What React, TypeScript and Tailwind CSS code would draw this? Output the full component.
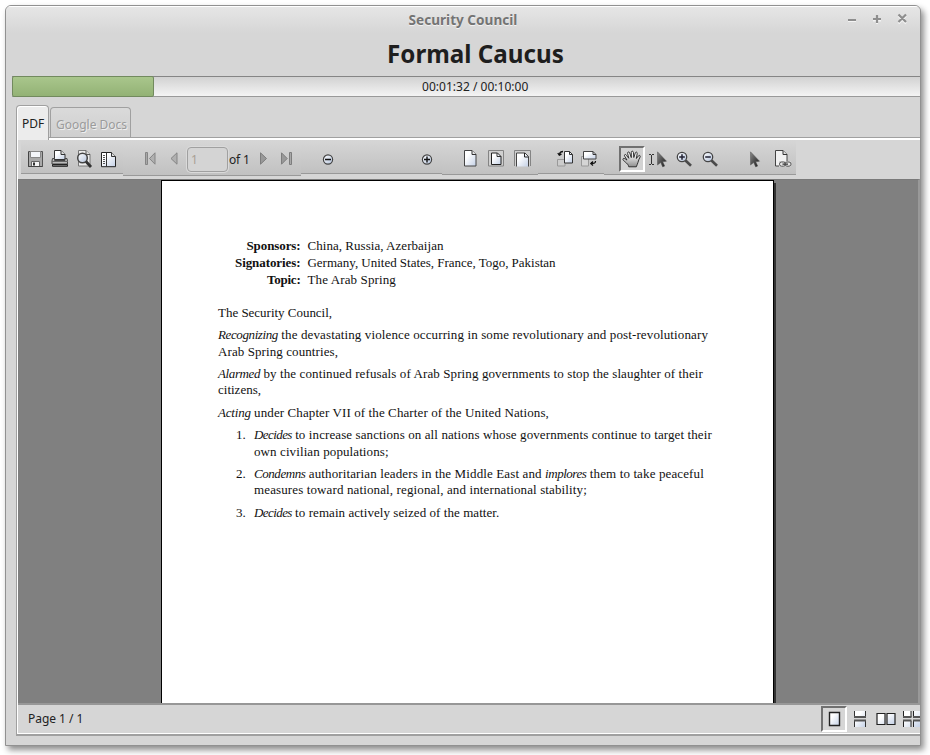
import React from 'react';

type Kids = { children?: React.ReactNode };

function Icon({ children, size = 20, className = '' }: Kids & { size?: number; className?: string }) {
  return (
    <svg width={size} height={size} viewBox={`0 0 ${size} ${size}`} fill="none" className={`block shrink-0 ${className}`}>
      {children}
    </svg>
  );
}

function Slot({ children, className = 'w-6' }: Kids & { className?: string }) {
  return <div className={`flex h-6 shrink-0 items-center justify-center ${className}`}>{children}</div>;
}

function Segment({ children, className }: Kids & { className: string }) {
  return (
    <div className={`flex shrink-0 items-start border-b border-[#999] bg-linear-to-b from-[#d6d6d6] to-[#c1c1c1] pt-[7px] ${className}`}>
      {children}
    </div>
  );
}

function Defs() {
  return (
    <svg width="0" height="0" className="absolute">
      <defs>
        <linearGradient id="paper" x1="0" y1="0" x2="1" y2="1">
          <stop offset="0.3" stopColor="#fff" />
          <stop offset="1" stopColor="#c3d0e6" />
        </linearGradient>
        <linearGradient id="lens" x1="0" y1="0" x2="1" y2="1">
          <stop offset="0" stopColor="#fff" />
          <stop offset="1" stopColor="#b4c3dc" />
        </linearGradient>
        <linearGradient id="dark" x1="0" y1="0" x2="1" y2="1">
          <stop offset="0" stopColor="#8a8a8a" />
          <stop offset="0.8" stopColor="#2c2c2c" />
        </linearGradient>
        <linearGradient id="palm" x1="0" y1="0" x2="0" y2="1">
          <stop offset="0.2" stopColor="#f6f6f6" />
          <stop offset="1" stopColor="#8d8d8d" />
        </linearGradient>
      </defs>
    </svg>
  );
}

const SaveIcon = () => (
  <Icon>
    <path d="M2.500 2.500h14v15h-14z" fill="#a9a9a9" stroke="#555" />
    <path d="M4.500 2.500h10v6h-10z" fill="#f4f6fa" stroke="#888" />
    <path d="M5.500 12.500h8v5h-8z" fill="#f4f4f4" stroke="#666" />
    <path d="M7 13.500h2v3H7z" fill="#333" />
    <path d="M2.500 3v14.500h14" stroke="#444" />
  </Icon>
);

const PrintIcon = () => (
  <Icon>
    <path d="M4.500 10.500v-9h6.500l4 4v5z" fill="url(#paper)" stroke="#333" />
    <path d="M11 1.500v4h4" fill="#ddd" stroke="#333" />
    <path d="M2.500 9.500h2v2h10.500v-2h2l.5 2.500v3h-15.500v-3z" fill="#bbb" stroke="#444" />
    <path d="M2 12.500h16" stroke="#666" />
    <path d="M2.500 15.500h15v1.800h-15z" fill="#777" stroke="#222" />
  </Icon>
);

const FindIcon = () => (
  <Icon>
    <path d="M4.500 1.500h7.500l4 4v11.500h-11.500z" fill="#ededed" stroke="#777" />
    <path d="M12 1.500v4h4" fill="#ddd" stroke="#555" />
    <circle cx="8.500" cy="9" r="4.800" fill="url(#lens)" stroke="#444" strokeWidth="1.500" />
    <path d="M12 12.500l5 5.500" stroke="#333" strokeWidth="2.800" />
  </Icon>
);

const SidebarIcon = () => (
  <Icon>
    <path d="M3.500 3.500h10l4 4v10.200h-14z" fill="url(#paper)" stroke="#222" />
    <path d="M13.500 3.500v4h4" fill="#ddd" stroke="#333" />
    <path d="M8.500 3.500v14" stroke="#333" />
    <path d="M5 6.500h2M5 8.500h2M5 10.500h2M5 12.500h2M5 14.500h2" stroke="#555" />
  </Icon>
);

const FirstIcon = () => (
  <Icon>
    <path d="M5.500 3.500h2v12h-2z" fill="#a8a8a8" stroke="#858585" />
    <path d="M15 3.800v11.400l-5.500-5.700z" fill="#b0b0b0" stroke="#858585" />
  </Icon>
);

const PrevIcon = () => (
  <Icon>
    <path d="M13 3.800v11.400l-6-5.700z" fill="#b0b0b0" stroke="#858585" />
  </Icon>
);

const NextIcon = () => (
  <Icon>
    <path d="M6.500 3.800v11.400l6-5.700z" fill="#999" stroke="#7d7d7d" />
  </Icon>
);

const LastIcon = () => (
  <Icon>
    <path d="M3.500 3.800v11.400l5.700-5.700z" fill="#999" stroke="#7d7d7d" />
    <path d="M11.500 3.500h2v12h-2z" fill="#a8a8a8" stroke="#7d7d7d" />
  </Icon>
);

const RoundIcon = ({ plus = false }: { plus?: boolean }) => (
  <Icon>
    <circle cx="10" cy="10.500" r="4.600" fill="url(#lens)" stroke="#444" strokeWidth="1.200" />
    <path d={plus ? 'M7 10.500h6M10 7.500v6' : 'M7 10.500h6'} stroke="#111" strokeWidth="1.400" />
  </Icon>
);

const PageIcon = () => (
  <Icon>
    <path d="M4.500 1.500h7.500l4 4v11.500h-11.500z" fill="url(#paper)" stroke="#444" />
    <path d="M12 1.500v4h4" fill="#e8e8e8" stroke="#333" />
  </Icon>
);

const FitPageIcon = () => (
  <Icon>
    <path d="M2.500 1.500h15v15.500h-15z" fill="#d0d0d0" stroke="#848484" />
    <path d="M5.500 4h6l3.500 3.500v8h-9.500z" fill="url(#paper)" stroke="#222" />
    <path d="M11 4v3.500h4" stroke="#333" />
  </Icon>
);

const FitWidthIcon = () => (
  <Icon>
    <path d="M2.500 17v-15.500h16v15.500" fill="#d0d0d0" stroke="#848484" />
    <path d="M4.500 17.500v-13.500h8.500l3.500 3.500v10" fill="url(#paper)" stroke="#444" />
    <path d="M12.500 4v4h4" stroke="#222" />
  </Icon>
);

const RotateLeftIcon = () => (
  <Icon>
    <path d="M2.500 10.500h7.500v6.500h-7.500z" fill="#ccc" stroke="#999" />
    <path d="M9.500 2.500h5l3 3v8.500h-8z" fill="url(#paper)" stroke="#333" />
    <path d="M14.500 2.500v3h3" stroke="#333" />
    <path d="M8 2.500c-2 0-3 .7-3.500 2.700M2.800 4l1.500 2.200 2.200-1" stroke="#111" strokeWidth="1.300" />
  </Icon>
);

const RotateRightIcon = () => (
  <Icon>
    <path d="M2.500 7.500h7v9.500h-7z" fill="#d5d5d5" stroke="#999" />
    <path d="M4.500 2.500h9.500l3 3v4.500h-12.500z" fill="url(#paper)" stroke="#444" />
    <path d="M14 2.500v3h3" stroke="#333" />
    <path d="M16.500 12c0 2-.7 2.600-4.500 2.600M14 12.500l-2.200 2.100 2.200 2" stroke="#111" strokeWidth="1.300" />
  </Icon>
);

const HandIcon = () => (
  <Icon>
    <path
      d="M6.800 17.800c-.4-2.200-1.800-3.300-3.500-4.700C2 12 .4 10.600 1 9.800c.8-1 2.500.1 4 1.300L2.700 7.200c-.9-1.700.9-2.400 1.700-.9l2.400 3L5.600 4.400c-.3-1.700 1.600-2 2.100-.4l1.600 4.600V3.300c0-1.500 2-1.500 2.100 0l.4 5.200 1.500-4.500c.5-1.500 2.200-1 1.900.5l-.8 5 2-2.600c1-1.200 2.300-.2 1.700 1.100-1.100 2.200-1.700 3.600-2.100 5.300-.4 1.900-1.300 3-1.700 4.500z"
      fill="url(#palm)"
      stroke="#222"
      strokeWidth=".9"
    />
  </Icon>
);

const TextSelectIcon = () => (
  <Icon>
    <path d="M1 5.500h2M4 5.500h2M1 15.500h2M4 15.500h2M3.500 6v9" stroke="#333" />
    <path d="M9.500 2.800v13.200l3.200-2.500 2 4.400 2-.9-2-4.200 3.800-.6z" fill="url(#dark)" stroke="#555" strokeWidth=".5" />
  </Icon>
);

const MagnifierIcon = ({ plus = false }: { plus?: boolean }) => (
  <Icon>
    <path d="M11.500 11.500l5.500 5.300" stroke="#4a4a4a" strokeWidth="2.600" />
    <circle cx="8" cy="8" r="4.700" fill="url(#lens)" stroke="#444" strokeWidth="1.300" />
    <path d={plus ? 'M5.200 8h5.600M8 5.200v5.600' : 'M5.200 8h5.600'} stroke="#223" strokeWidth="1.500" />
  </Icon>
);

const PointerIcon = () => (
  <Icon>
    <path d="M5.500 2.800v13.200l3.200-2.500 2 4.400 2-.9-2-4.200 3.800-.6z" fill="url(#dark)" stroke="#555" strokeWidth=".5" />
  </Icon>
);

const PageLinkIcon = () => (
  <Icon>
    <path d="M3.500 1.500h7.500l4 4v11.500h-11.500z" fill="#f1f1f1" stroke="#444" />
    <path d="M11 1.500v4h4" fill="#ddd" stroke="#333" />
    <path d="M7 12h12v6H7z" fill="#d6d6d6" />
    <rect x="7.500" y="13" width="6" height="4.200" rx="2" fill="#e4e4e4" stroke="#555" />
    <rect x="13" y="13" width="6" height="4.200" rx="2" fill="#e4e4e4" stroke="#555" />
    <path d="M10.500 15.100h5.500" stroke="#333" strokeWidth="1.200" />
  </Icon>
);

const SingleViewIcon = () => (
  <Icon>
    <path d="M5.500 3.500h10v13h-10z" fill="url(#paper)" stroke="#222" strokeWidth="1.400" />
  </Icon>
);

const ContinuousIcon = () => (
  <Icon>
    <path d="M5 2h11v6H5zM5 12h11v6H5z" fill="url(#paper)" />
    <path d="M4.500 2v6.500M15.500 2v6.500M4.500 11.500v6.500M15.500 11.500v6.500" stroke="#333" />
    <path d="M4 8h12M4 11.500h12" stroke="#555" strokeWidth="1.800" />
  </Icon>
);

const FacingIcon = () => (
  <Icon>
    <path d="M1 4.500h8v11h-8zM11 4.500h8v11h-8z" fill="url(#paper)" stroke="#222" strokeWidth="1.200" />
  </Icon>
);

const FacingContinuousIcon = () => (
  <Icon>
    <path d="M1 2h8v6H1zM11 2h8v6h-8zM1 12h8v6H1zM11 12h8v6h-8z" fill="url(#paper)" />
    <path d="M1.500 2v6M9 2v6M11.500 2v6M19 2v6M1.500 12v6M9 12v6M11.500 12v6M19 12v6" stroke="#222" />
    <path d="M1 8h8.500M11 8h8.500M1 11.500h8.500M11 11.500h8.500" stroke="#555" strokeWidth="1.800" />
  </Icon>
);

function Toolbar() {
  return (
    <div className="flex h-[39px] items-start bg-[#d6d6d6] pl-[3px]">
      <Segment className="h-[34px] w-[102px] pl-[3px]">
        <Slot><SaveIcon /></Slot>
        <Slot><PrintIcon /></Slot>
        <Slot><FindIcon /></Slot>
        <Slot><SidebarIcon /></Slot>
      </Segment>
      <Segment className="h-[36px] w-[178px] pl-[15px]">
        <Slot><FirstIcon /></Slot>
        <Slot><PrevIcon /></Slot>
        <div className="ml-px flex h-[25px] w-[41px] shrink-0 items-center rounded-[4px] border border-[#a0a0a0] bg-[#d4d4d4] pl-[3px] text-[12px] text-[#a9a094] shadow-[0_0_0_1px_#dadada]">1</div>
        <span className="ml-[1px] w-[23px] shrink-0 text-[12px] leading-[25px] tracking-[-0.2px] whitespace-nowrap text-[#222]">of 1</span>
        <Slot><NextIcon /></Slot>
        <Slot><LastIcon /></Slot>
      </Segment>
      <Segment className="h-[34px] w-[141px] pl-[15px]">
        <Slot className="mr-[75px] w-6"><RoundIcon /></Slot>
        <Slot><RoundIcon plus /></Slot>
      </Segment>
      <Segment className="h-[35px] w-[96px] pl-[15px]">
        <Slot className="w-[26px]"><PageIcon /></Slot>
        <Slot className="w-[26px]"><FitPageIcon /></Slot>
        <Slot className="w-[26px]"><FitWidthIcon /></Slot>
      </Segment>
      <Segment className="h-[34px] w-[66px] pl-[15px]">
        <Slot><RotateLeftIcon /></Slot>
        <Slot><RotateRightIcon /></Slot>
      </Segment>
      <Segment className="h-[35px] w-[192px] pl-[15px]">
        <div className="-mt-px flex h-[26px] w-[26px] shrink-0 items-center justify-center border-2 border-t-[#707070] border-r-white border-b-white border-l-[#707070] bg-[#d2d2d2]">
          <HandIcon />
        </div>
        <Slot className="w-[26px]"><TextSelectIcon /></Slot>
        <Slot className="w-[26px]"><MagnifierIcon plus /></Slot>
        <Slot className="w-[26px]"><MagnifierIcon /></Slot>
        <Slot className="ml-5 w-6"><PointerIcon /></Slot>
        <Slot className="ml-[3px] w-6"><PageLinkIcon /></Slot>
      </Segment>
    </div>
  );
}

function Field({ label, labelClass, value, valueClass }: { label: string; labelClass: string; value: string; valueClass: string }) {
  return (
    <div className="flex">
      <b className={`mr-[7px] flex w-[82.500px] justify-end ${labelClass}`}>{label}</b>
      <span className={valueClass}>{value}</span>
    </div>
  );
}

function Resolution() {
  return (
    <div className="pt-[57.200px] pl-[56px] font-['Liberation_Serif',serif] text-[13px] leading-[16.700px] whitespace-nowrap text-[#111]">
      <Field label="Sponsors:" labelClass="tracking-[-0.1px]" value="China, Russia, Azerbaijan" valueClass="tracking-[0.04px]" />
      <Field label="Signatories:" labelClass="tracking-[-0.08px]" value="Germany, United States, France, Togo, Pakistan" valueClass="tracking-[-0.02px]" />
      <Field label="Topic:" labelClass="tracking-[-0.23px]" value="The Arab Spring" valueClass="tracking-[0.12px]" />
      <p className="mt-[16.300px] tracking-[-0.02px]">The Security Council,</p>
      <p className="mt-[5.500px] tracking-[0.118px]">
        <i className="tracking-[-0.39px]">Recognizing</i> the devastating violence occurring in some revolutionary and post-revolutionary
        <br />
        <span className="tracking-[0.09px]">Arab Spring countries,</span>
      </p>
      <p className="mt-[5.500px] tracking-[0.105px]">
        <i className="tracking-[-0.38px]">Alarmed</i> by the continued refusals of Arab Spring governments to stop the slaughter of their
        <br />
        <span className="tracking-[0px]">citizens,</span>
      </p>
      <p className="mt-[5.500px] tracking-[0.1px]">
        <i className="tracking-[-0.2px]">Acting</i> under Chapter VII of the Charter of the United Nations,
      </p>
      <ol>
        <li className="mt-[5.500px] flex pl-[18px]">
          <span className="w-[18px]">1.</span>
          <div className="tracking-[0.100px]">
            <i className="tracking-[-0.58px]">Decides</i> to increase sanctions on all nations whose governments continue to target their
            <br />
            own civilian populations;
          </div>
        </li>
        <li className="mt-[5.500px] flex pl-[18px]">
          <span className="w-[18px]">2.</span>
          <div className="tracking-[0.125px]">
            <i className="tracking-[-0.44px]">Condemns</i> authoritarian leaders in the Middle East and <i className="tracking-[-0.46px]">implores</i> them to take peaceful
            <br />
            measures toward national, regional, and international stability;
          </div>
        </li>
        <li className="mt-[5.500px] flex pl-[18px]">
          <span className="w-[18px]">3.</span>
          <div className="tracking-[0.06px]">
            <i className="tracking-[-0.58px]">Decides</i> to remain actively seized of the matter.
          </div>
        </li>
      </ol>
    </div>
  );
}

function WindowButtons() {
  return (
    <svg width="62" height="14" viewBox="0 0 62 14" fill="none" className="block">
      <path d="M1 9h8M26 8.500h8M30 4.500v7.500M51.500 4l7.500 7.500M59 4l-7.500 7.500" stroke="#f4f4f4" strokeWidth="2" />
      <path d="M1 8h8M26 7h8M30 3v8M51.500 2.500l7.500 7.500M59 2.500l-7.500 7.500" stroke="#8e8e8e" strokeWidth="2.200" />
    </svg>
  );
}

export default function App() {
  return (
    <div className="h-[755px] w-[930px] overflow-hidden bg-white pt-[5px] pl-[5px] font-['Noto_Sans',sans-serif] text-[#222]">
      <Defs />
      <div className="flex h-[741px] w-[916px] flex-col overflow-hidden rounded-t-[6px] border border-[#919191] bg-[#d6d6d6] shadow-[3px_4px_6px_rgba(0,0,0,0.45)]">
        <div className="grid h-[27px] shrink-0 grid-cols-[1fr_auto_1fr] items-center border-t border-white bg-linear-to-b from-[#e6e6e6] to-[#d6d6d6]">
          <div />
          <div className="text-[13.600px] leading-[26px] font-bold text-[#747474] [text-shadow:0_1px_0_#f2f2f2]">Security Council</div>
          <div className="flex justify-end pr-[11px] pb-[2px]">
            <WindowButtons />
          </div>
        </div>
        <h1 className="h-[43px] shrink-0 pt-[4px] pl-[25px] text-center text-[24.200px] leading-[33px] font-bold text-[#1e1e1e]">Formal Caucus</h1>

        <div className="ml-[6px] flex h-[21px] shrink-0 border-t border-b border-t-[#858585] border-b-[#999] bg-linear-to-b from-[#d2d2d2] to-[#f4f4f4]">
          <div className="-my-px h-[21px] w-[142px] rounded-[2px] border border-[#728a5e] bg-linear-to-b from-[#a9c68c] to-[#93b275]" />
          <div className="flex-1 pl-[268px] text-[12px] leading-[20px] tracking-[0.020px]">00:01:32 / 00:10:00</div>
        </div>

        <div className="mt-[8px] flex h-[32px] shrink-0 items-end pl-[10px]">
          <div className="z-10 -mb-[3px] flex h-[35px] w-[33px] justify-center rounded-t-[4px] border border-b-0 border-[#a0a0a0] bg-[#ececec] pt-[9px] pl-px text-[12px] leading-[18px] shadow-[inset_1px_1px_0_#fff]">
            PDF
          </div>
          <div className="ml-px flex h-[30px] w-[81px] justify-center rounded-t-[4px] border border-b-0 border-[#a0a0a0] bg-linear-to-b from-[#dadada] to-[#cfcfcf] pt-[7px] pl-[2px] text-[12px] leading-[20px] whitespace-nowrap text-[#9b9b9b] [text-shadow:1px_1px_0_#eee]">
            Google Docs
          </div>
        </div>

        <div className="ml-[10px] flex h-[599px] shrink-0 flex-col border-t border-b-2 border-l border-[#a0a0a0]">
          <div className="flex flex-1 flex-col border-t-2 border-b border-l border-white">
            <Toolbar />
            <div className="flex h-[526px] shrink-0 border-t border-r-2 border-b-2 border-t-[#7a7a7a] border-r-[#999] border-b-[#979797] bg-[#808080] pl-[143px]">
              <div className="h-full w-[613px] border border-b-0 border-black bg-white">
                <Resolution />
              </div>
              <div className="mt-[3px] w-[2px] bg-[#333]" />
            </div>
            <div className="flex flex-1 items-start overflow-hidden pt-px">
              <span className="w-[803px] shrink-0 pl-[10px] text-[12px] leading-[26px] tracking-[-0.050px]">Page 1 / 1</span>
              <div className="flex h-[26px] w-[26px] shrink-0 items-center justify-center border-2 border-t-[#707070] border-r-white border-b-white border-l-[#707070]">
                <SingleViewIcon />
              </div>
              <Slot className="mt-px w-[26px]"><ContinuousIcon /></Slot>
              <Slot className="mt-px w-[26px]"><FacingIcon /></Slot>
              <Slot className="mt-px w-[26px]"><FacingContinuousIcon /></Slot>
            </div>
          </div>
        </div>
      </div>
    </div>
  );
}
